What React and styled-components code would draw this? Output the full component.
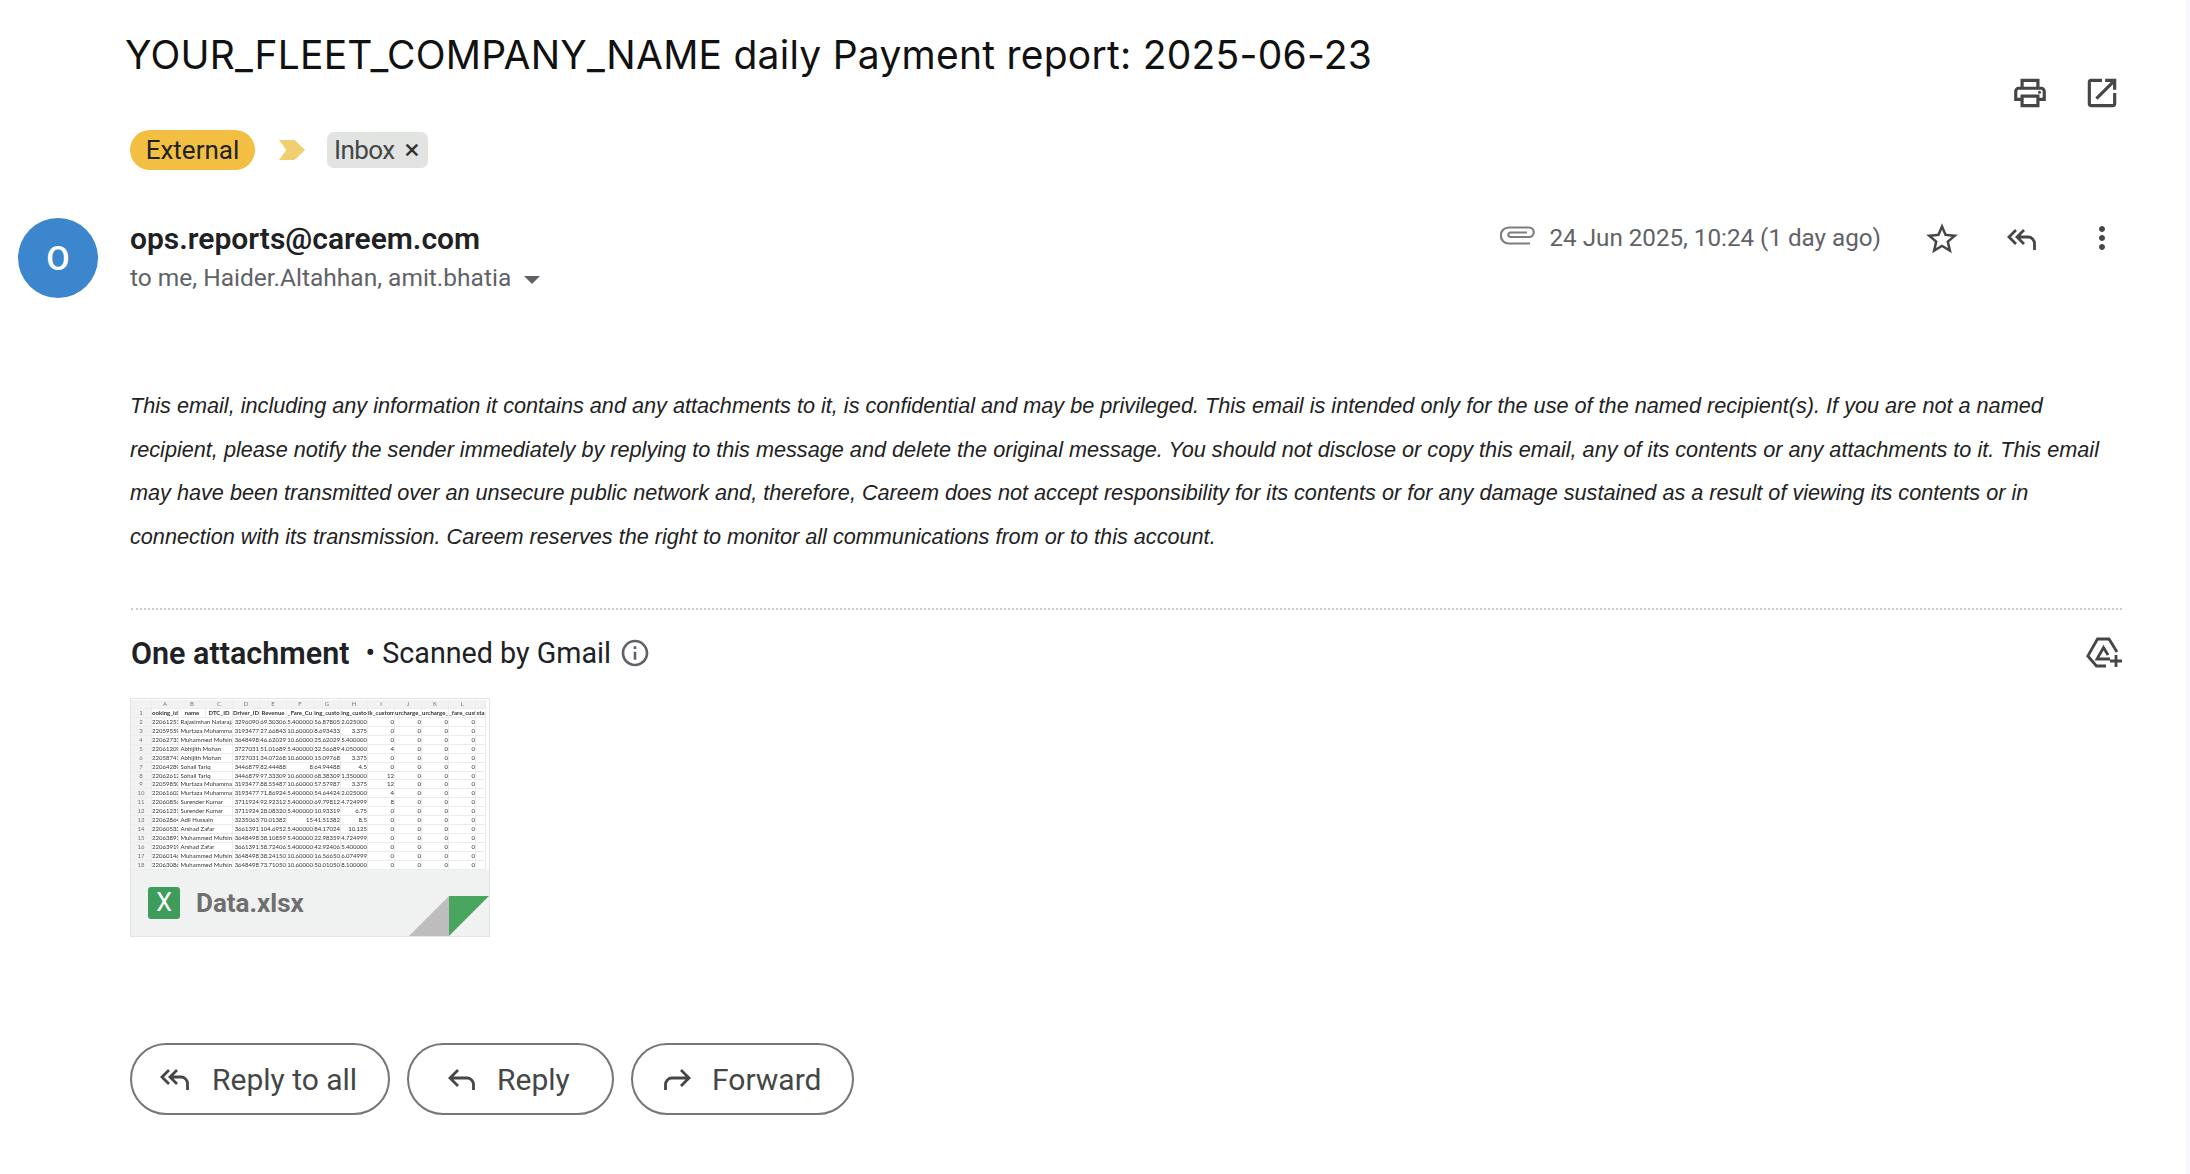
import React from 'react'
import styled, { createGlobalStyle } from 'styled-components';

const Global = createGlobalStyle`
  html, body { margin:0; padding:0; background:#fff; }
  body { font-family:Roboto, "Liberation Sans", sans-serif; }
`

const Page = styled.div`
  box-sizing:border-box;
  width:2190px;
  height:1174px;
  overflow:hidden;
  background:#fff;
  border-right:4px solid #f6f8fc;
  padding:0 0 0 18px;
`

const SubjectRow = styled.header`
  display:flex;
  justify-content:space-between;
  padding:25px 65px 0 107px;
  height:130px;
  box-sizing:border-box;
`
const Title = styled.h1`
  margin:0;
  font-family:Inter, Roboto, sans-serif;
  font-size:39px;
  line-height:60px;
  font-weight:400;
  color:#111;
  letter-spacing:0.24px;
  white-space:nowrap;
`
const Tools = styled.div`
  display:flex;
  gap:34px;
  padding-top:49px;
  color:#444746;
`
const Labels = styled.div`
  display:flex;
  align-items:center;
  height:40px;
  margin-left:112px;
`
const Pill = styled.span`
  display:inline-flex;
  align-items:center;
  justify-content:center;
  height:40px;
  width:125px;
  border-radius:20px;
  background:#f2bf42;
  color:#202124;
  font-size:26px;
`
const Chevron = styled.span`
  width:26px;
  height:20px;
  margin:0 22px 0 24px;
  background:#f0ce72;
  clip-path:polygon(0 0,60% 0,100% 50%,60% 100%,0 100%,28% 50%);
`
const InboxTag = styled.span`
  display:inline-flex;
  align-items:center;
  gap:10px;
  height:36px;
  padding:0 9px 0 7px;
  border-radius:7px;
  background:#e2e4e2;
  color:#444746;
  font-size:26px;
  letter-spacing:-0.6px;
`
const Close = styled.span`
  font-size:28px;
  line-height:1;
  color:#333;
`

const SenderRow = styled.section`
  display:flex;
  margin-top:48px;
  height:80px;
`
const Avatar = styled.div`
  flex:none;
  width:80px;
  height:80px;
  border-radius:50%;
  background:#3b86cd;
  color:#fff;
  font-size:34px;
  font-weight:500;
  display:flex;
  align-items:center;
  justify-content:center;
`
const SenderInfo = styled.div`
  flex:1;
  margin-left:32px;
  padding-top:3px;
`
const SenderName = styled.div`
  font-size:30px;
  line-height:36px;
  font-weight:600;
  color:#202124;
`
const Recipients = styled.div`
  display:flex;
  align-items:center;
  font-size:24.5px;
  line-height:36px;
  color:#5f6368;
  margin-top:3px;
`
const Caret = styled.span`
  width:0;
  height:0;
  margin-left:13px;
  margin-top:3px;
  border-left:8px solid transparent;
  border-right:8px solid transparent;
  border-top:8px solid #5f6368;
`
const MetaRow = styled.div`
  display:flex;
  align-items:center;
  height:42px;
  padding-right:66px;
  color:#444746;
`
const DateText = styled.span`
  font-size:24.2px;
  color:#5f6368;
  margin:-3px 42px 0 15px;
`
const IconSlot = styled.span`
  display:flex;
  margin-left:${p => p.$gap || 0}px;
  margin-top:${p => p.$top || 0}px;
`

const Body = styled.p`
  margin:86px 0 0 112px;
  font-family:"Liberation Sans", Arial, sans-serif;
  font-style:italic;
  font-size:21.67px;
  line-height:43.5px;
  color:#222;
  white-space:nowrap;
`
const Divider = styled.hr`
  margin:50px 64px 0 113px;
  border:0;
  border-top:2px dotted #ccc;
`
const AttachHead = styled.div`
  display:flex;
  align-items:center;
  justify-content:space-between;
  margin:23px 64px 0 113px;
  height:40px;
`
const AttachTitle = styled.div`
  display:flex;
  align-items:center;
  color:#202124;
  font-size:28.7px;
`
const Strong = styled.strong`
  font-size:30.5px;
  font-weight:600;
  margin-right:16px;
`
const InfoIcon = styled.span`
  display:flex;
  margin-left:8px;
  color:#5f6368;
`

const Thumb = styled.div`
  position:relative;
  box-sizing:border-box;
  width:360px;
  height:239px;
  margin:25px 0 0 112px;
  background:#f0f1f1;
  border:1px solid #e3e4e4;
  display:flex;
  flex-direction:column;
`
const Sheet = styled.div`
  display:grid;
  grid-template-columns:21px repeat(12,27px) 10px;
  grid-auto-rows:8.95px;
  padding-top:1px;
  background:#fff;
  font-family:Lato, "Open Sans", sans-serif;
  font-size:6px;
  color:#333;
  filter:blur(0.35px);
`
const Cell = styled.div`
  box-sizing:border-box;
  grid-column:span ${p => p.$span || 1};
  border-right:1px solid #ececec;
  border-bottom:1px solid #ececec;
  white-space:nowrap;
  overflow:hidden;
  line-height:8px;
  padding:0 ${p => p.$align === 'left' ? '0 0 1.5px' : '0'};
  text-align:${p => p.$align || 'right'};
  background:${p => p.$shade ? '#f2f2f2' : 'transparent'};
  color:${p => p.$shade ? '#777' : 'inherit'};
  font-weight:${p => p.$bold ? 700 : 400};
`
const ThumbFooter = styled.div`
  flex:1;
  display:flex;
  align-items:center;
  gap:16px;
  padding:0 0 0 17px;
`
const XlsIcon = styled.span`
  width:32px;
  height:32px;
  border-radius:3px;
  background:#3f9d5c;
  color:#fff;
  font-size:25px;
  display:flex;
  align-items:center;
  justify-content:center;
`
const FileName = styled.span`
  font-size:26px;
  font-weight:700;
  color:#6f6f6f;
`
const Fold = styled.svg`
  position:absolute;
  right:0;
  bottom:0;
`

const Actions = styled.div`
  display:flex;
  gap:17px;
  margin:106px 0 0 112px;
`
const ActionButton = styled.button`
  box-sizing:border-box;
  width:${p => p.$w}px;
  height:72px;
  border:2px solid #747775;
  border-radius:36px;
  background:#fff;
  color:#444746;
  font-family:inherit;
  font-size:30px;
  display:flex;
  align-items:center;
  padding:0 0 0 ${p => p.$pad}px;
  gap:${p => p.$g}px;
`

const Glyph = ({ d, size = 38 }) => (
  <svg width={size} height={size} viewBox="0 0 24 24" fill="currentColor"><path d={d} /></svg>
)
const ReplyIcon = () => (
  <svg width="29" height="22" viewBox="0 0 29 22" fill="none" stroke="currentColor" strokeWidth="2.8">
    <path d="M11 2 L3 10 L11 18 M3 10 H20 a6.5 6.5 0 0 1 6.5 6.5 V22" />
  </svg>
)
const ReplyAllIcon = ({ w = 30 }) => (
  <svg width={w} height="22" viewBox="0 0 30 22" fill="none" stroke="currentColor" strokeWidth="2.8">
    <path d="M9 2 L2 9 L9 16 M17 2 L10 9 L17 16 M10 9 H21 a6.5 6.5 0 0 1 6.5 6.5 V22" />
  </svg>
)
const ForwardIcon = () => (
  <svg width="29" height="22" viewBox="0 0 29 22" fill="none" stroke="currentColor" strokeWidth="2.8">
    <path d="M18 2 L26 10 L18 18 M26 10 H9 a6.5 6.5 0 0 0 -6.5 6.5 V22" />
  </svg>
)
const ClipIcon = () => (
  <svg width="35" height="19" viewBox="0 0 35 19" fill="none" stroke="#7d7d7d" strokeWidth="2.2">
    <path d="M30 17.5 H8.8 A8 8 0 0 1 8.8 1.5 H29 A4.7 4.7 0 0 1 29 11 H10.5 A2.2 2.2 0 0 1 10.5 6.5 H27" />
  </svg>
)
const DriveAddIcon = () => (
  <svg width="36" height="31" viewBox="0 0 36 31" fill="none" stroke="#444746" strokeWidth="2.8">
    <path d="M24 22 H11 L17.5 10.5 L22 18 M20 29 H10.5 L1.8 19 L11.5 2 H23 L31 15" />
    <path d="M30 18 V30 M24 24 H36" />
  </svg>
)

const PRINT = 'M19 8h-1V3H6v5H5c-1.66 0-3 1.34-3 3v6h4v4h12v-4h4v-6c0-1.66-1.34-3-3-3zM8 5h8v3H8V5zm8 14H8v-4h8v4zm2-4v-2H6v2H4v-4c0-.55.45-1 1-1h14c.55 0 1 .45 1 1v4h-2zm0-4.5a1 1 0 1 0 0 2 1 1 0 0 0 0-2z'
const OPEN_NEW = 'M19 19H5V5h7V3H5c-1.11 0-2 .9-2 2v14c0 1.1.89 2 2 2h14c1.1 0 2-.9 2-2v-7h-2v7zM14 3v2h3.59l-9.83 9.83 1.41 1.41L19 6.41V10h2V3h-7z'
const STAR = 'M22 9.24l-7.19-.62L12 2 9.19 8.63 2 9.24l5.46 4.73L5.82 21 12 17.27 18.18 21l-1.63-7.03L22 9.24zM12 15.4l-3.76 2.27 1-4.28-3.32-2.88 4.38-.38L12 6.1l1.71 4.04 4.38.38-3.32 2.88 1 4.28L12 15.4z'
const MORE = 'M12 8c1.1 0 2-.9 2-2s-.9-2-2-2-2 .9-2 2 .9 2 2 2zm0 2c-1.1 0-2 .9-2 2s.9 2 2 2 2-.9 2-2-.9-2-2-2zm0 6c-1.1 0-2 .9-2 2s.9 2 2 2 2-.9 2-2-.9-2-2-2z'
const INFO = 'M11 7h2v2h-2zm0 4h2v6h-2zm1-9C6.48 2 2 6.48 2 12s4.48 10 10 10 10-4.48 10-10S17.52 2 12 2zm0 18c-4.41 0-8-3.59-8-8s3.59-8 8-8 8 3.59 8 8-3.59 8-8 8z'

const letters = ['A', 'B', 'C', 'D', 'E', 'F', 'G', 'H', 'I', 'J', 'K', 'L', '']
const headers = ['ooking_id', 'name', 'DTC_ID', 'Driver_ID', 'Revenue', '_Fare_Cu', 'ing_custo', 'ing_custo', 'ik_custom', 'urcharge_', 'urcharge_', '_fare_cust', 'sta']
const rows = [
  ['22061251', 'Rajasimhan Nataraja', '3296090', '69.30306', '5.400000', '56.87805', '2.025000', 0],
  ['22059559', 'Murtaza Muhammad', '3193477', '27.66843', '10.60000', '8.693433', '3.375', 0],
  ['22062733', 'Muhammed Mufsin', '3648498', '46.62029', '10.60000', '25.62029', '5.400000', 0],
  ['22061209', 'Abhijith Mohan', '3727031', '51.01689', '5.400000', '32.56689', '4.050000', 4],
  ['22058741', 'Abhijith Mohan', '3727031', '34.07268', '10.60000', '15.09768', '3.375', 0],
  ['22064289', 'Sohail Tariq', '3446879', '82.44488', '8', '64.94488', '4.5', 0],
  ['22062612', 'Sohail Tariq', '3446879', '97.33309', '10.60000', '68.38309', '1.350000', 12],
  ['22059850', 'Murtaza Muhammad', '3193477', '88.55487', '10.60000', '57.57987', '3.375', 12],
  ['22061602', 'Murtaza Muhammad', '3193477', '71.86924', '5.400000', '54.64424', '2.025000', 4],
  ['22060856', 'Surender Kumar', '3711924', '92.92312', '5.400000', '69.79812', '4.724999', 8],
  ['22061231', 'Surender Kumar', '3711924', '28.08320', '5.400000', '10.93319', '6.75', 0],
  ['22062864', 'Adil Hussain', '3235063', '70.01382', '15', '41.51382', '8.5', 0],
  ['22060533', 'Arshad Zafar', '3661391', '104.6952', '5.400000', '84.17024', '10.125', 0],
  ['22063891', 'Muhammed Mufsin', '3648498', '38.10859', '5.400000', '22.98359', '4.724999', 0],
  ['22063919', 'Arshad Zafar', '3661391', '58.72406', '5.400000', '42.92406', '5.400000', 0],
  ['22060146', 'Muhammed Mufsin', '3648498', '38.24150', '10.60000', '16.56650', '6.074999', 0],
  ['22063086', 'Muhammed Mufsin', '3648498', '73.71050', '10.60000', '50.01050', '8.100000', 0],
]

const App = () => (
  <Page>
    <Global />
    <SubjectRow>
      <Title>YOUR_FLEET_COMPANY_NAME daily Payment report: 2025-06-23</Title>
      <Tools>
        <Glyph d={PRINT} />
        <Glyph d={OPEN_NEW} />
      </Tools>
    </SubjectRow>
    <Labels>
      <Pill>External</Pill>
      <Chevron />
      <InboxTag>Inbox <Close>×</Close></InboxTag>
    </Labels>
    <SenderRow>
      <Avatar>O</Avatar>
      <SenderInfo>
        <SenderName>ops.reports@careem.com</SenderName>
        <Recipients>to me, Haider.Altahhan, amit.bhatia<Caret /></Recipients>
      </SenderInfo>
      <MetaRow>
        <IconSlot $top={-7}><ClipIcon /></IconSlot>
        <DateText>24 Jun 2025, 10:24 (1 day ago)</DateText>
        <Glyph d={STAR} />
        <IconSlot $gap={46}><ReplyAllIcon /></IconSlot>
        <IconSlot $gap={47} $top={-2}><Glyph d={MORE} size={36} /></IconSlot>
      </MetaRow>
    </SenderRow>
    <Body>
      This email, including any information it contains and any attachments to it, is confidential and may be privileged. This email is intended only for the use of the named recipient(s). If you are not a named<br />
      recipient, please notify the sender immediately by replying to this message and delete the original message. You should not disclose or copy this email, any of its contents or any attachments to it. This email<br />
      may have been transmitted over an unsecure public network and, therefore, Careem does not accept responsibility for its contents or for any damage sustained as a result of viewing its contents or in<br />
      connection with its transmission. Careem reserves the right to monitor all communications from or to this account.
    </Body>
    <Divider />
    <AttachHead>
      <AttachTitle>
        <Strong>One attachment</Strong>
        • Scanned by Gmail
        <InfoIcon><Glyph d={INFO} size={32} /></InfoIcon>
      </AttachTitle>
      <IconSlot $top={-2}><DriveAddIcon /></IconSlot>
    </AttachHead>
    <Thumb>
      <Sheet>
        <Cell $shade />
        {letters.map((l, i) => <Cell key={i} $shade $align="center">{l}</Cell>)}
        <Cell $shade $align="center">1</Cell>
        {headers.map((h, i) => <Cell key={i} $bold $align="center">{h}</Cell>)}
        {rows.map((r, i) => (
          <React.Fragment key={i}>
            <Cell $shade $align="center">{i + 2}</Cell>
            <Cell>{r[0]}</Cell>
            <Cell $span={2} $align="left">{r[1]}</Cell>
            {r.slice(2, 8).map((v, j) => <Cell key={j}>{v}</Cell>)}
            <Cell>0</Cell>
            <Cell>0</Cell>
            <Cell>0</Cell>
            <Cell />
          </React.Fragment>
        ))}
      </Sheet>
      <ThumbFooter>
        <XlsIcon>X</XlsIcon>
        <FileName>Data.xlsx</FileName>
      </ThumbFooter>
      <Fold width="80" height="40" viewBox="0 0 80 40">
        <polygon points="40,0 40,40 0,40" fill="#bdbdbd" />
        <polygon points="40,0 80,0 40,40" fill="#4aa55f" />
      </Fold>
    </Thumb>
    <Actions>
      <ActionButton $w={260} $pad={28} $g={22}><ReplyAllIcon />Reply to all</ActionButton>
      <ActionButton $w={207} $pad={38} $g={21}><ReplyIcon />Reply</ActionButton>
      <ActionButton $w={223} $pad={30} $g={20}><ForwardIcon />Forward</ActionButton>
    </Actions>
  </Page>
)
export default App;
